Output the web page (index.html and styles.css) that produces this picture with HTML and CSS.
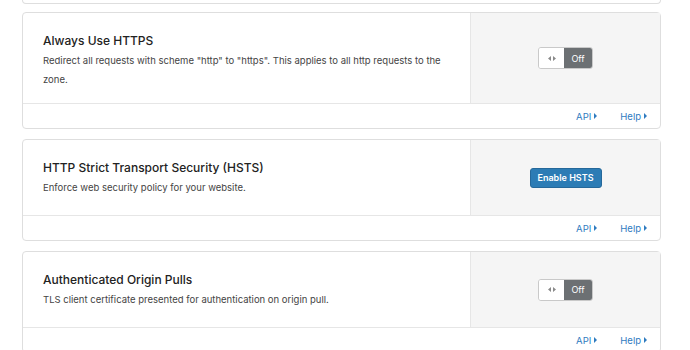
FILE: index.html
```html
<!DOCTYPE html>
<html lang="en">
<head>
    <meta charset="UTF-8">
    <title>Crypto Settings</title>
    <link rel="stylesheet" href="styles.css">
</head>
<body>
    <main class="settings">
        <div class="card card-tail"></div>

        <section class="card">
            <div class="card-main">
                <div class="card-body">
                    <h3 class="card-title">Always Use HTTPS</h3>
                    <p class="card-desc">Redirect all requests with scheme "http" to "https". This applies to all http requests to the zone.</p>
                </div>
                <div class="card-control">
                    <div class="toggle">
                        <span class="toggle-knob">
                            <svg width="8" height="5" viewBox="0 0 8 5"><path d="M3 0L0 2.5L3 5Z M5 0L8 2.5L5 5Z" fill="#8a8a8a"/></svg>
                        </span>
                        <span class="toggle-state">Off</span>
                    </div>
                </div>
            </div>
            <div class="card-footer">
                <a class="footer-link" href="#">API</a>
                <a class="footer-link" href="#">Help</a>
            </div>
        </section>

        <section class="card">
            <div class="card-main">
                <div class="card-body">
                    <h3 class="card-title">HTTP Strict Transport Security (HSTS)</h3>
                    <p class="card-desc">Enforce web security policy for your website.</p>
                </div>
                <div class="card-control">
                    <button class="btn-primary">Enable HSTS</button>
                </div>
            </div>
            <div class="card-footer">
                <a class="footer-link" href="#">API</a>
                <a class="footer-link" href="#">Help</a>
            </div>
        </section>

        <section class="card">
            <div class="card-main">
                <div class="card-body">
                    <h3 class="card-title">Authenticated Origin Pulls</h3>
                    <p class="card-desc">TLS client certificate presented for authentication on origin pull.</p>
                </div>
                <div class="card-control">
                    <div class="toggle">
                        <span class="toggle-knob">
                            <svg width="8" height="5" viewBox="0 0 8 5"><path d="M3 0L0 2.5L3 5Z M5 0L8 2.5L5 5Z" fill="#8a8a8a"/></svg>
                        </span>
                        <span class="toggle-state">Off</span>
                    </div>
                </div>
            </div>
            <div class="card-footer">
                <a class="footer-link" href="#">API</a>
                <a class="footer-link" href="#">Help</a>
            </div>
        </section>
    </main>
</body>
</html>
```

FILE: styles.css
```css
* {
    margin: 0;
    padding: 0;
    box-sizing: border-box;
}

body {
    font-family: 'Inter', 'Liberation Sans', Arial, sans-serif;
    color: #333;
    background: #fff;
    overflow: hidden;
}

.settings {
    width: 639px;
    margin-left: 22px;
}

/* Cards */
.card {
    border: 1px solid #dedede;
    border-radius: 4px;
    background: #fff;
    margin-bottom: 10px;
}

.card-tail {
    height: 4px;
    border-top: none;
    border-radius: 0 0 4px 4px;
    margin-bottom: 8px;
}

.card-main {
    display: flex;
}

.card-body {
    flex: 1;
    min-height: 75px;
    padding: 18px 20px 14px 20px;
}

.card-title {
    font-size: 12px;
    font-weight: 500;
    line-height: 20px;
    color: #222;
}

.card-desc {
    font-size: 9.5px;
    line-height: 19px;
    color: #444;
}

.card-control {
    width: 190px;
    background: #f5f5f5;
    border-left: 1px solid #e6e6e6;
    display: flex;
    align-items: center;
    justify-content: center;
}

/* Toggle */
.toggle {
    display: flex;
    width: 55px;
    height: 22px;
    border: 1px solid #c9c9c9;
    border-radius: 3px;
    overflow: hidden;
}

.toggle-knob {
    width: 25px;
    background: #fff;
    display: flex;
    align-items: center;
    justify-content: center;
}

.toggle-state {
    flex: 1;
    background: #6c7073;
    color: #fff;
    font-size: 9px;
    display: flex;
    align-items: center;
    justify-content: center;
}

.btn-primary {
    font-family: inherit;
    width: 72px;
    height: 20px;
    border: 1px solid #25689a;
    border-radius: 3px;
    background: #2c7cb5;
    color: #fff;
    font-size: 9px;
    font-weight: 600;
}

/* Footer */
.card-footer {
    border-top: 1px solid #e6e6e6;
    height: 25px;
    display: flex;
    justify-content: flex-end;
    align-items: center;
    gap: 23px;
    padding-right: 13px;
}

.footer-link {
    font-size: 9.5px;
    color: #2f7bbf;
    text-decoration: none;
    display: flex;
    align-items: center;
}

.footer-link::after {
    content: '';
    margin-left: 3px;
    border-left: 3px solid #2f7bbf;
    border-top: 3px solid transparent;
    border-bottom: 3px solid transparent;
}
```
